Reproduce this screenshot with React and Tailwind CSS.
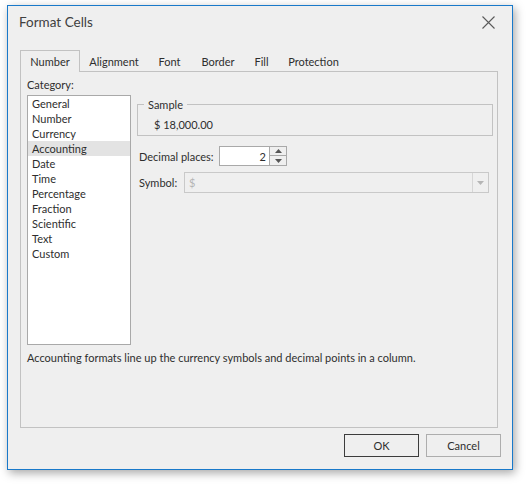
export default function App() {
  const categories = ["General","Number","Currency","Accounting","Date","Time","Percentage","Fraction","Scientific","Text","Custom"];
  const tabs = [
    { label: "Number", w: "w-[60px]" },
    { label: "Alignment", w: "w-[68px]" },
    { label: "Font", w: "w-[43px]" },
    { label: "Border", w: "w-[54px]" },
    { label: "Fill", w: "w-[33px]" },
    { label: "Protection", w: "w-[71px]" },
  ];
  return (
    <div className="w-[526px] h-[484px] bg-white pl-[7px] pt-[5px] text-[11px] text-[#2e2e2e] font-['Lato',sans-serif] leading-[15px]">
      <div className="w-[506px] h-[465px] border border-[#1979ca] bg-[#efefef] shadow-[2px_3px_9px_rgba(0,0,0,0.35)] flex flex-col">
        {/* title bar */}
        <div className="h-[44px] flex items-start justify-between pl-[11px] pr-[17px] pt-[6px]">
          <span className="text-[13.5px] text-[#404040] leading-[20px]">Format Cells</span>
          <svg width="13" height="13" viewBox="0 0 13 13" className="mt-[4px]">
            <path d="M0.5 0.5 L12.5 12.5 M12.5 0.5 L0.5 12.5" stroke="#5a5a5a" strokeWidth="1.1" fill="none" />
          </svg>
        </div>
        {/* tab area */}
        <div className="pl-[12px] pr-[14px]">
          <div className="flex h-[22px]">
            {tabs.map((t, i) => (
              <div
                key={t.label}
                className={
                  i === 0
                    ? `${t.w} h-[22px] border border-b-0 border-[#c2c2c2] bg-[#efefef] flex items-center justify-center relative z-10`
                    : `${t.w} h-[21px] mt-[1px] flex items-center justify-center`
                }
              >
                {t.label}
              </div>
            ))}
          </div>
          <div className="h-[357px] -mt-[1px] border border-[#c2c2c2] pl-[6px] pr-[4px] flex flex-col">
            <div className="h-[23px] flex items-center pt-[1px]">Category:</div>
            <div className="flex gap-[6px]">
              <div className="w-[104px] h-[250px] border border-[#a9a9a9] bg-white shrink-0">
                {categories.map((c) => (
                  <div
                    key={c}
                    className={`h-[15px] leading-[15px] pl-[4px] ${c === "Accounting" ? "bg-[#e3e3e3]" : ""}`}
                  >
                    {c}
                  </div>
                ))}
              </div>
              <div className="flex-1 pt-[3px]">
                {/* Sample group */}
                <div className="relative h-[32px] border border-[#c2c2c2] mt-[6px] pl-[16px] pt-[12px]">
                  <span className="absolute -top-[8px] left-[6px] bg-[#efefef] px-[4px] leading-[15px]">Sample</span>
                  <span>$ 18,000.00</span>
                </div>
                <div className="flex items-center mt-[10px] h-[20px]">
                  <span className="w-[82px] pl-[2px] whitespace-nowrap">Decimal places:</span>
                  <div className="w-[51px] h-[20px] border border-[#a9a9a9] bg-white flex items-center justify-end pr-[3px]">2</div>
                  <div className="w-[18px] h-[20px] flex flex-col -ml-[1px]">
                    <div className="h-[10px] border border-[#a9a9a9] bg-[#efefef] flex items-center justify-center">
                      <svg width="7" height="4" viewBox="0 0 7 4"><path d="M3.5 0 L7 4 L0 4 Z" fill="#555" /></svg>
                    </div>
                    <div className="h-[10px] border border-t-0 border-[#a9a9a9] bg-[#efefef] flex items-center justify-center">
                      <svg width="7" height="4" viewBox="0 0 7 4"><path d="M0 0 L7 0 L3.5 4 Z" fill="#555" /></svg>
                    </div>
                  </div>
                </div>
                <div className="flex items-center mt-[6px] h-[21px]">
                  <span className="w-[47px] pl-[2px] whitespace-nowrap">Symbol:</span>
                  <div className="w-[305px] h-[21px] border border-[#c9c9c9] flex items-center">
                    <span className="flex-1 pl-[4px] text-[#b5b5b5]">$</span>
                    <div className="w-[16px] h-full border-l border-[#d6d6d6] flex items-center justify-center">
                      <svg width="7" height="4" viewBox="0 0 7 4"><path d="M0 0 L7 0 L3.5 4 Z" fill="#b5b5b5" /></svg>
                    </div>
                  </div>
                </div>
              </div>
            </div>
            <div className="mt-[5px] h-[15px] whitespace-nowrap">
              Accounting formats line up the currency symbols and decimal points in a column.
            </div>
          </div>
        </div>
        {/* buttons */}
        <div className="flex justify-end gap-[7px] pr-[11px] mt-[6px]">
          <button className="w-[75px] h-[23px] border border-[#3c3c3c] bg-[#efefef]">OK</button>
          <button className="w-[75px] h-[23px] border border-[#adadad] bg-[#efefef]">Cancel</button>
        </div>
      </div>
    </div>
  );
}
